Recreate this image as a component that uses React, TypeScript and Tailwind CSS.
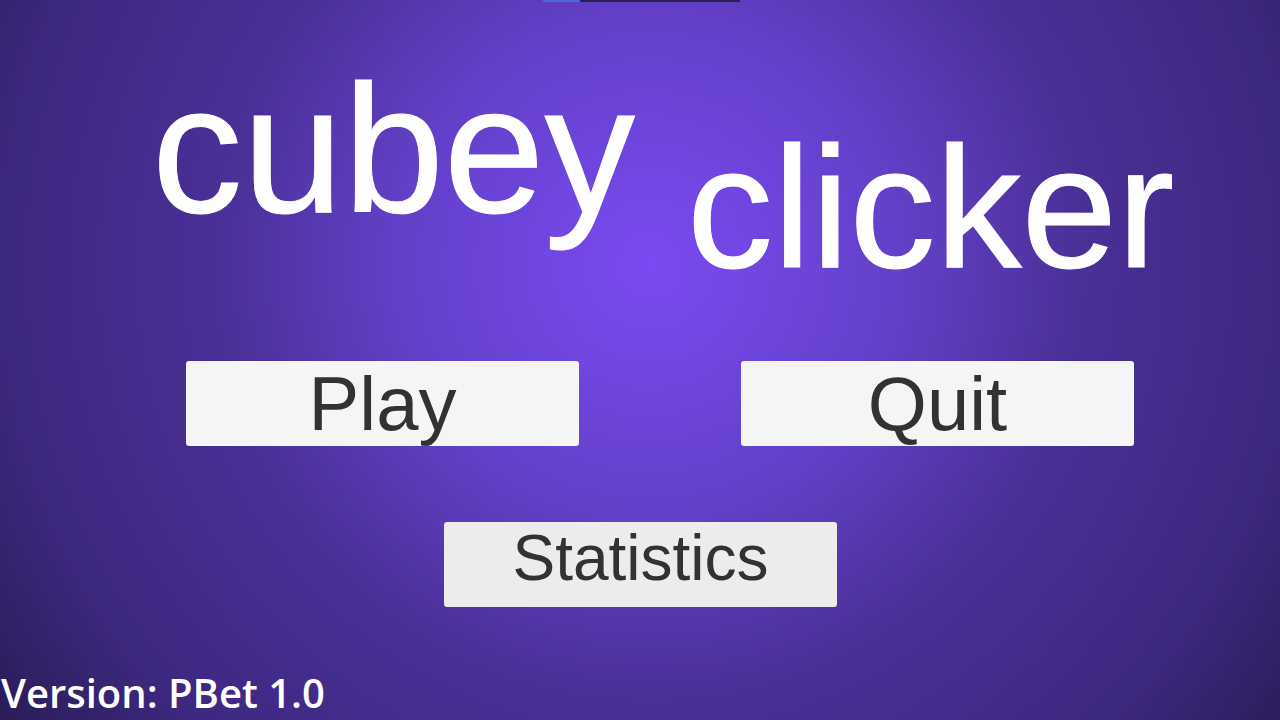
import React from 'react'

const MenuButton: React.FC<{ label: string; className?: string; textClass?: string }> = ({
  label,
  className = '',
  textClass = '',
}) => (
  <button
    className={`flex items-center justify-center w-[393px] h-[85px] rounded-[3px] text-[#323232] font-['Liberation_Sans',Arial,sans-serif] leading-none ${className}`}
  >
    <span className={textClass}>{label}</span>
  </button>
)

export default function App() {
  return (
    <div className="relative w-[1280px] h-[720px] overflow-hidden bg-[radial-gradient(circle_at_650px_265px,#7a4af2_0px,#6340c8_250px,#4a2f96_435px,#3d2880_640px,#271a50_820px)] font-['Liberation_Sans',Arial,sans-serif]">
      {/* loading strip at the top edge */}
      <div className="absolute top-0 left-[543px] flex h-[2px]">
        <div className="w-[37px] bg-[#4a6ad8]" />
        <div className="w-[160px] bg-[#2a2058]" />
      </div>

      {/* Title */}
      <div className="flex items-start pl-[152px] pt-[59px] text-white leading-none [-webkit-text-stroke:1px_white]">
        <span className="text-[181px]">cubey</span>
        <span className="text-[172px] ml-[52px] mt-[62px]">clicker</span>
      </div>

      {/* Buttons */}
      <div className="flex pl-[186px] gap-[162px] mt-[68px]">
        <MenuButton label="Play" className="bg-[#f5f5f5]" textClass="text-[76px]" />
        <MenuButton label="Quit" className="bg-[#f5f5f5]" textClass="text-[76px]" />
      </div>
      <div className="flex pl-[444px] mt-[76px]">
        <MenuButton label="Statistics" className="bg-[#ececec] w-[392px] pb-[13px]" textClass="text-[64px]" />
      </div>

      {/* Version */}
      <div className="absolute left-0 bottom-[7px] pl-[1px] text-white text-[40px] font-semibold leading-none font-['Open_Sans',sans-serif]">
        Version: PBet 1.0
      </div>
    </div>
  )
}
